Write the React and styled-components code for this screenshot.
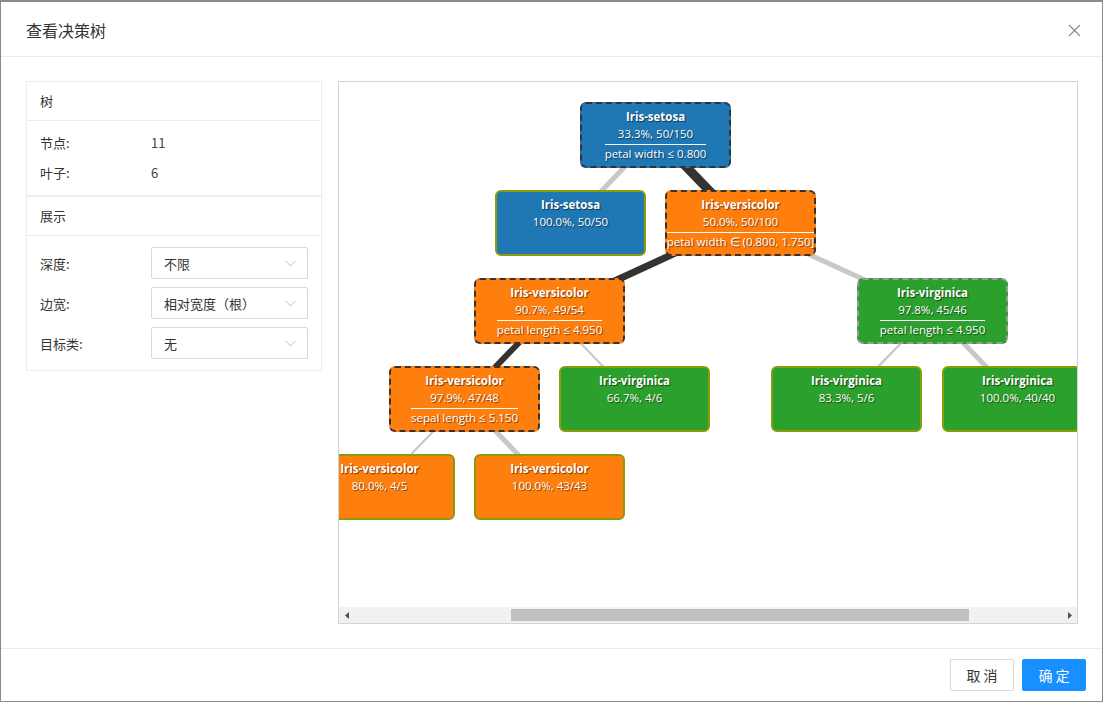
import React from 'react';
import styled, { createGlobalStyle, css } from 'styled-components';

const GlobalStyle = createGlobalStyle`
  html, body {
    margin: 0;
    padding: 0;
    background: #fff;
  }
  body {
    font-family: "Noto Sans CJK SC", "Noto Sans", sans-serif;
    color: #333;
  }
  * { box-sizing: border-box; }
`;

const COLORS = {
  setosa: '#1f77b4',
  versicolor: '#ff7f0e',
  virginica: '#2ca02c',
};

// node positions inside the tree canvas (free canvas: place is content)
const nodes = [
  { id: 'root', x: 241, y: 20, cls: 'setosa', name: 'Iris-setosa', stat: '33.3%, 50/150', split: 'petal width ≤ 0.800', border: 'dark' },
  { id: 'n1', x: 156, y: 108, cls: 'setosa', name: 'Iris-setosa', stat: '100.0%, 50/50' },
  { id: 'n2', x: 326, y: 108, cls: 'versicolor', name: 'Iris-versicolor', stat: '50.0%, 50/100', split: 'petal width ∈ (0.800, 1.750]', border: 'dark' },
  { id: 'n3', x: 135, y: 196, cls: 'versicolor', name: 'Iris-versicolor', stat: '90.7%, 49/54', split: 'petal length ≤ 4.950', border: 'dark' },
  { id: 'n4', x: 518, y: 196, cls: 'virginica', name: 'Iris-virginica', stat: '97.8%, 45/46', split: 'petal length ≤ 4.950', border: 'light' },
  { id: 'n5', x: 50, y: 284, cls: 'versicolor', name: 'Iris-versicolor', stat: '97.9%, 47/48', split: 'sepal length ≤ 5.150', border: 'dark' },
  { id: 'n6', x: 220, y: 284, cls: 'virginica', name: 'Iris-virginica', stat: '66.7%, 4/6' },
  { id: 'n7', x: 432, y: 284, cls: 'virginica', name: 'Iris-virginica', stat: '83.3%, 5/6' },
  { id: 'n8', x: 603, y: 284, cls: 'virginica', name: 'Iris-virginica', stat: '100.0%, 40/40' },
  { id: 'n9', x: -35, y: 372, cls: 'versicolor', name: 'Iris-versicolor', stat: '80.0%, 4/5' },
  { id: 'n10', x: 135, y: 372, cls: 'versicolor', name: 'Iris-versicolor', stat: '100.0%, 43/43' },
];

const edges = [
  ['root', 'n1', 5, false],
  ['root', 'n2', 9, true],
  ['n2', 'n3', 7, true],
  ['n2', 'n4', 5, false],
  ['n3', 'n5', 6, true],
  ['n3', 'n6', 2, false],
  ['n4', 'n7', 2.5, false],
  ['n4', 'n8', 5, false],
  ['n5', 'n9', 2, false],
  ['n5', 'n10', 5, false],
];

const NODE_W = 151;
const NODE_H = 66;

function App() {
  const byId = Object.fromEntries(nodes.map((n) => [n.id, n]));
  return (
    <>
      <GlobalStyle />
      <Modal>
        <Header>
          <Title>查看决策树</Title>
          <CloseButton aria-label="close">
            <svg width="13" height="13" viewBox="0 0 13 13">
              <path d="M1 1 L12 12 M12 1 L1 12" stroke="#8c8c8c" strokeWidth="1.2" fill="none" />
            </svg>
          </CloseButton>
        </Header>

        <Body>
          <Sidebar>
            <Card>
              <CardHead>树</CardHead>
              <InfoBody>
                <InfoRow>
                  <Label>节点:</Label>
                  <Value>11</Value>
                </InfoRow>
                <InfoRow>
                  <Label>叶子:</Label>
                  <Value>6</Value>
                </InfoRow>
              </InfoBody>
            </Card>
            <Card>
              <CardHead>展示</CardHead>
              <FormBody>
                <FormRow>
                  <Label>深度:</Label>
                  <Select>
                    <span>不限</span>
                    <Chevron />
                  </Select>
                </FormRow>
                <FormRow>
                  <Label>边宽:</Label>
                  <Select>
                    <span>相对宽度（根）</span>
                    <Chevron />
                  </Select>
                </FormRow>
                <FormRow>
                  <Label>目标类:</Label>
                  <Select>
                    <span>无</span>
                    <Chevron />
                  </Select>
                </FormRow>
              </FormBody>
            </Card>
          </Sidebar>

          <TreePanel>
            <TreeCanvas>
              <EdgeLayer width="738" height="524">
                {edges.map(([a, b, w, dark]) => {
                  const p = byId[a];
                  const c = byId[b];
                  return (
                    <line
                      key={a + b}
                      x1={p.x + NODE_W / 2}
                      y1={p.y + NODE_H / 2}
                      x2={c.x + NODE_W / 2}
                      y2={c.y + NODE_H / 2}
                      stroke={dark ? '#333' : '#c8c8c8'}
                      strokeWidth={w}
                    />
                  );
                })}
              </EdgeLayer>
              {nodes.map((n) => (
                <TreeNode
                  key={n.id}
                  $color={COLORS[n.cls]}
                  $border={n.border}
                  style={{ left: n.x, top: n.y }}
                >
                  <NodeName>{n.name}</NodeName>
                  <NodeLine>{n.stat}</NodeLine>
                  {n.split && <NodeSplit>{n.split}</NodeSplit>}
                </TreeNode>
              ))}
            </TreeCanvas>
            <ScrollBar>
              <ScrollArrow>
                <svg width="4" height="7" viewBox="0 0 4 7"><path d="M4 0 L0 3.5 L4 7 Z" fill="#505050" /></svg>
              </ScrollArrow>
              <ScrollTrack>
                <ScrollThumb $offset={157} $size={458} />
              </ScrollTrack>
              <ScrollArrow>
                <svg width="4" height="7" viewBox="0 0 4 7"><path d="M0 0 L4 3.5 L0 7 Z" fill="#505050" /></svg>
              </ScrollArrow>
            </ScrollBar>
          </TreePanel>
        </Body>

        <Footer>
          <Button>取 消</Button>
          <Button $primary>确 定</Button>
        </Footer>
      </Modal>
    </>
  );
}

function Chevron() {
  return (
    <ChevronIcon width="11" height="7" viewBox="0 0 11 7">
      <path d="M0.5 0.8 L5.5 5.8 L10.5 0.8" stroke="#bfbfbf" strokeWidth="1" fill="none" />
    </ChevronIcon>
  );
}

const Modal = styled.div`
  width: 1103px;
  height: 702px;
  display: flex;
  flex-direction: column;
  border: 1px solid #8a8a8a;
  border-top-width: 2px;
  background: #fff;
`;

const Header = styled.div`
  height: 55px;
  flex: none;
  display: flex;
  align-items: center;
  justify-content: space-between;
  padding: 0 20px 0 25px;
  border-bottom: 1px solid #ebebeb;
`;

const Title = styled.div`
  font-size: 16px;
  color: #333;
  padding-top: 1px;
`;

const CloseButton = styled.div`
  width: 16px;
  height: 16px;
  display: flex;
  align-items: center;
  justify-content: center;
  margin-top: 2px;
`;

const Body = styled.div`
  flex: 1;
  display: flex;
  gap: 16px;
  padding: 24px 24px 24px 25px;
  min-height: 0;
`;

const Sidebar = styled.div`
  width: 296px;
  flex: none;
  display: flex;
  flex-direction: column;
  align-self: flex-start;
`;

const Card = styled.div`
  border: 1px solid #ececec;
  background: #fff;
`;

const CardHead = styled.div`
  height: 39px;
  line-height: 38px;
  padding-left: 13px;
  font-size: 13px;
  color: #333;
  border-bottom: 1px solid #ececec;
`;

const InfoBody = styled.div`
  padding: 6px 0 8px 13px;
`;

const InfoRow = styled.div`
  height: 30px;
  display: flex;
  align-items: center;
`;

const Label = styled.div`
  width: 111px;
  flex: none;
  font-size: 13px;
  color: #333;
`;

const Value = styled.div`
  font-size: 13px;
  color: #444;
`;

const FormBody = styled.div`
  padding: 11px 13px 11px 13px;
  display: flex;
  flex-direction: column;
  gap: 8px;
`;

const FormRow = styled.div`
  display: flex;
  align-items: center;
`;

const Select = styled.div`
  flex: 1;
  height: 32px;
  border: 1px solid #d9d9d9;
  border-radius: 2px;
  display: flex;
  align-items: center;
  justify-content: space-between;
  padding: 0 11px 0 12px;
  font-size: 13px;
  color: #333;
`;

const ChevronIcon = styled.svg`
  flex: none;
  margin-top: 1px;
`;

const TreePanel = styled.div`
  flex: 1;
  display: flex;
  flex-direction: column;
  border: 1px solid #d4d4d4;
  min-width: 0;
`;

const TreeCanvas = styled.div`
  flex: 1;
  position: relative;
  overflow: hidden;
`;

const EdgeLayer = styled.svg`
  position: absolute;
  left: 0;
  top: 0;
`;

const TreeNode = styled.div`
  position: absolute;
  width: ${NODE_W}px;
  height: ${NODE_H}px;
  border-radius: 6px;
  background: ${(p) => p.$color};
  padding-top: 4px;
  display: flex;
  flex-direction: column;
  align-items: center;
  color: #fff;
  font-family: "Open Sans", "Noto Sans", sans-serif;
  font-size: 11.5px;
  text-shadow: 1px 1px 1px rgba(0, 0, 0, 0.55);
  white-space: nowrap;
  ${(p) =>
    p.$border === 'dark'
      ? css`border: 2px dashed #333;`
      : p.$border === 'light'
      ? css`border: 2px dashed #9a9a9a;`
      : css`border: 2px solid #8a9c0c;`}
`;

const NodeName = styled.div`
  font-weight: 700;
  line-height: 17px;
`;

const NodeLine = styled.div`
  line-height: 17px;
`;

const NodeSplit = styled.div`
  margin-top: 2px;
  border-top: 1px solid #fff;
  line-height: 18px;
`;

const ScrollBar = styled.div`
  height: 16px;
  flex: none;
  display: flex;
  background: #f1f1f1;
`;

const ScrollArrow = styled.div`
  width: 15px;
  flex: none;
  display: flex;
  align-items: center;
  justify-content: center;
`;

const ScrollTrack = styled.div`
  flex: 1;
  display: flex;
  align-items: center;
`;

const ScrollThumb = styled.div`
  height: 12px;
  margin-left: ${(p) => p.$offset}px;
  width: ${(p) => p.$size}px;
  background: #c1c1c1;
`;

const Footer = styled.div`
  height: 53px;
  flex: none;
  border-top: 1px solid #ebebeb;
  display: flex;
  align-items: center;
  justify-content: flex-end;
  gap: 8px;
  padding: 0 16px 0 0;
`;

const Button = styled.div`
  width: 64px;
  height: 32px;
  display: flex;
  align-items: center;
  justify-content: center;
  border-radius: 2px;
  font-size: 14px;
  ${(p) =>
    p.$primary
      ? css`
          background: #1890ff;
          border: 1px solid #1890ff;
          color: #fff;
        `
      : css`
          background: #fff;
          border: 1px solid #d9d9d9;
          color: #333;
        `}
`;

export default App;
